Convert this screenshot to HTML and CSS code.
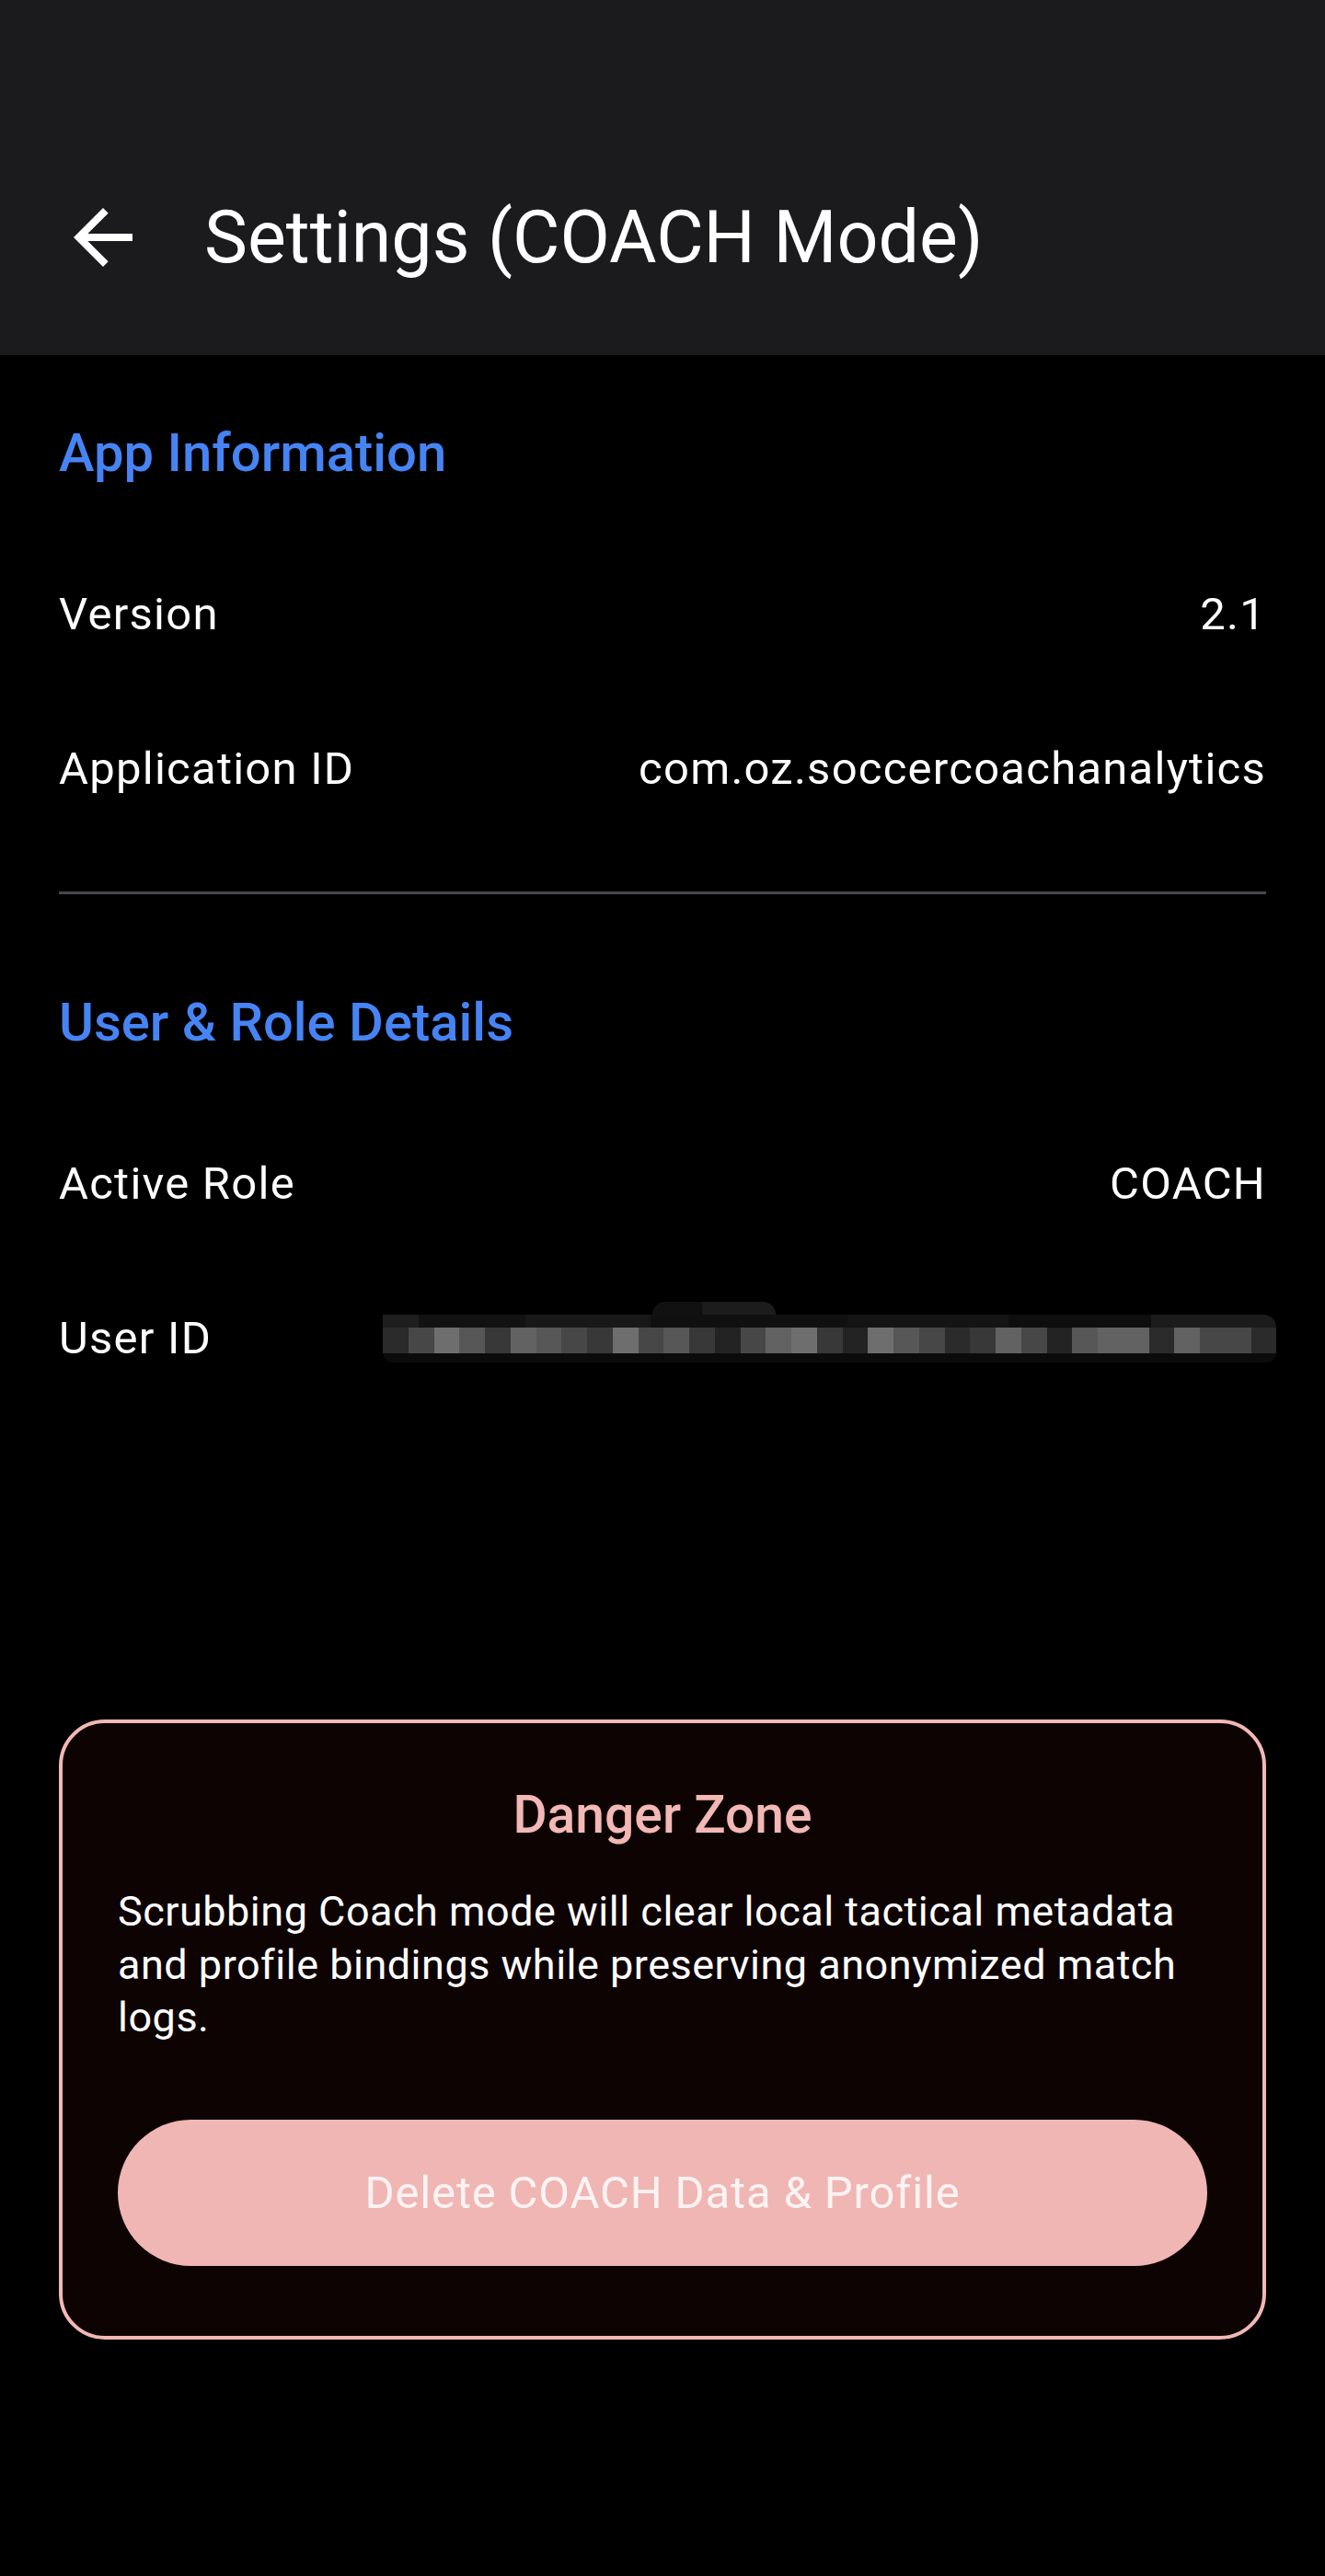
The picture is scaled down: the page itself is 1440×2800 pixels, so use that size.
FILE: index.html
```html
<!DOCTYPE html>
<html lang="en">
<head>
<meta charset="utf-8">
<title>Settings (COACH Mode)</title>
<link rel="stylesheet" href="styles.css">
</head>
<body>
<header class="appbar">
  <div class="toolbar">
    <button class="back" aria-label="Back">
      <svg viewBox="0 0 24 24"><path d="M20 11H7.83l5.59-5.59L12 4l-8 8 8 8 1.41-1.41L7.83 13H20v-2z"/></svg>
    </button>
    <h1 class="title">Settings (COACH Mode)</h1>
  </div>
</header>
<main class="content">
  <section class="section">
    <h2 class="section-title">App Information</h2>
    <div class="row"><span class="label">Version</span><span class="value">2.1</span></div>
    <div class="row"><span class="label">Application ID</span><span class="value">com.oz.soccercoachanalytics</span></div>
  </section>
  <hr class="divider">
  <section class="section">
    <h2 class="section-title">User &amp; Role Details</h2>
    <div class="row"><span class="label">Active Role</span><span class="value">COACH</span></div>
    <div class="row"><span class="label">User ID</span>
      <div class="mosaic" aria-hidden="true">
        <div class="m-bump"></div>
        <div class="m-top"></div>
        <div class="m-mid">
          <i class="s2"></i><i class="s4"></i><i class="s7"></i><i class="s5"></i><i class="s3"></i><i class="s6"></i><i class="s5"></i><i class="s4"></i><i class="s3"></i><i class="s7"></i><i class="s4"></i><i class="s5"></i><i class="s3"></i><i class="s1"></i><i class="s4"></i><i class="s6"></i><i class="s7"></i><i class="s3"></i><i class="s1"></i><i class="s7"></i><i class="s5"></i><i class="s4"></i><i class="s2"></i><i class="s3"></i><i class="s6"></i><i class="s4"></i><i class="s1"></i><i class="s5"></i><i class="s6"></i><i class="s6"></i><i class="s2"></i><i class="s6"></i><i class="s4"></i><i class="s4"></i><i class="s2"></i>
        </div>
        <div class="m-bot"></div>
      </div>
    </div>
  </section>
  <div class="danger">
    <h3 class="danger-title">Danger Zone</h3>
    <p class="danger-text">Scrubbing Coach mode will clear local tactical metadata and profile bindings while preserving anonymized match logs.</p>
    <button class="danger-btn">Delete COACH Data &amp; Profile</button>
  </div>
</main>
</body>
</html>
```
FILE: styles.css
```css
* { box-sizing: border-box; }
html, body { margin: 0; padding: 0; }
body {
  background: #000;
  color: #fff;
  font-family: Roboto, "Noto Sans", "Liberation Sans", sans-serif;
  min-height: 2800px;
}
.appbar {
  background: #1b1b1d;
  height: 386px;
  padding-top: 130px;
}
.toolbar {
  height: 256px;
  display: flex;
  align-items: center;
  padding-left: 64px;
  gap: 62px;
}
.back {
  width: 96px;
  height: 96px;
  padding: 0;
  border: 0;
  background: none;
  display: flex;
}
.back svg { width: 96px; height: 96px; fill: #fff; }
.title {
  margin: 0;
  font-size: 79px;
  line-height: 96px;
  font-weight: 400;
  color: #fff;
}
.content { padding: 66px 64px 0; }
.section-title {
  margin: 0 0 52px;
  font-size: 58px;
  line-height: 80px;
  font-weight: 500;
  color: #4684f4;
}
.row {
  height: 168px;
  display: flex;
  align-items: center;
  justify-content: space-between;
  font-size: 49px;
  line-height: 58px;
  letter-spacing: 1.25px;
  color: #fff;
}
.divider {
  margin: 49px 0 99px;
  border: 0;
  height: 3px;
  background: #48484d;
}
.mosaic {
  position: relative;
  width: 971px;
  height: 52px;
  margin-right: -11px;
  display: flex;
  flex-direction: column;
}
.m-bump {
  position: absolute;
  left: 293px;
  top: -14px;
  width: 134px;
  height: 14px;
  border-radius: 30px 30px 0 0;
  background: linear-gradient(to right, #111 0 40%, #1c1c1c 40% 100%);
}
.m-top {
  height: 14px;
  background: linear-gradient(to right, #1e1e1e 0 4%, #121212 4% 16%, #181818 16% 30%, #101010 30% 52%, #141414 52% 70%, #0e0e0e 70% 86%, #1c1c1c 86% 100%);
  border-radius: 0 14px 0 0;
}
.m-mid { height: 28px; display: flex; }
.m-mid i { flex: 1; display: block; }
.m-bot {
  height: 10px;
  background: #0b0b0b;
  border-radius: 0 0 10px 10px;
}
.s1 { background: #232323; }
.s2 { background: #2b2b2b; }
.s3 { background: #383838; }
.s4 { background: #474747; }
.s5 { background: #575757; }
.s6 { background: #626262; }
.s7 { background: #6e6e6e; }
.danger {
  margin-top: 330px;
  border: 4px solid #f2b8b5;
  border-radius: 50px;
  background: #0e0303;
  padding: 66px 60px 76px;
}
.danger-title {
  margin: 0 0 42px;
  text-align: center;
  font-size: 57px;
  line-height: 68px;
  font-weight: 500;
  color: #f2b8b5;
}
.danger-text {
  margin: 0 0 82px;
  font-size: 45px;
  line-height: 57.5px;
  letter-spacing: 0.5px;
  color: #fff;
}
.danger-btn {
  display: block;
  width: 100%;
  height: 159px;
  border: 0;
  border-radius: 80px;
  background: #f0b6b4;
  color: #fdf3f3;
  font-family: Roboto, "Noto Sans", sans-serif;
  font-size: 49px;
  font-weight: 400;
  letter-spacing: 0.85px;
}
```
